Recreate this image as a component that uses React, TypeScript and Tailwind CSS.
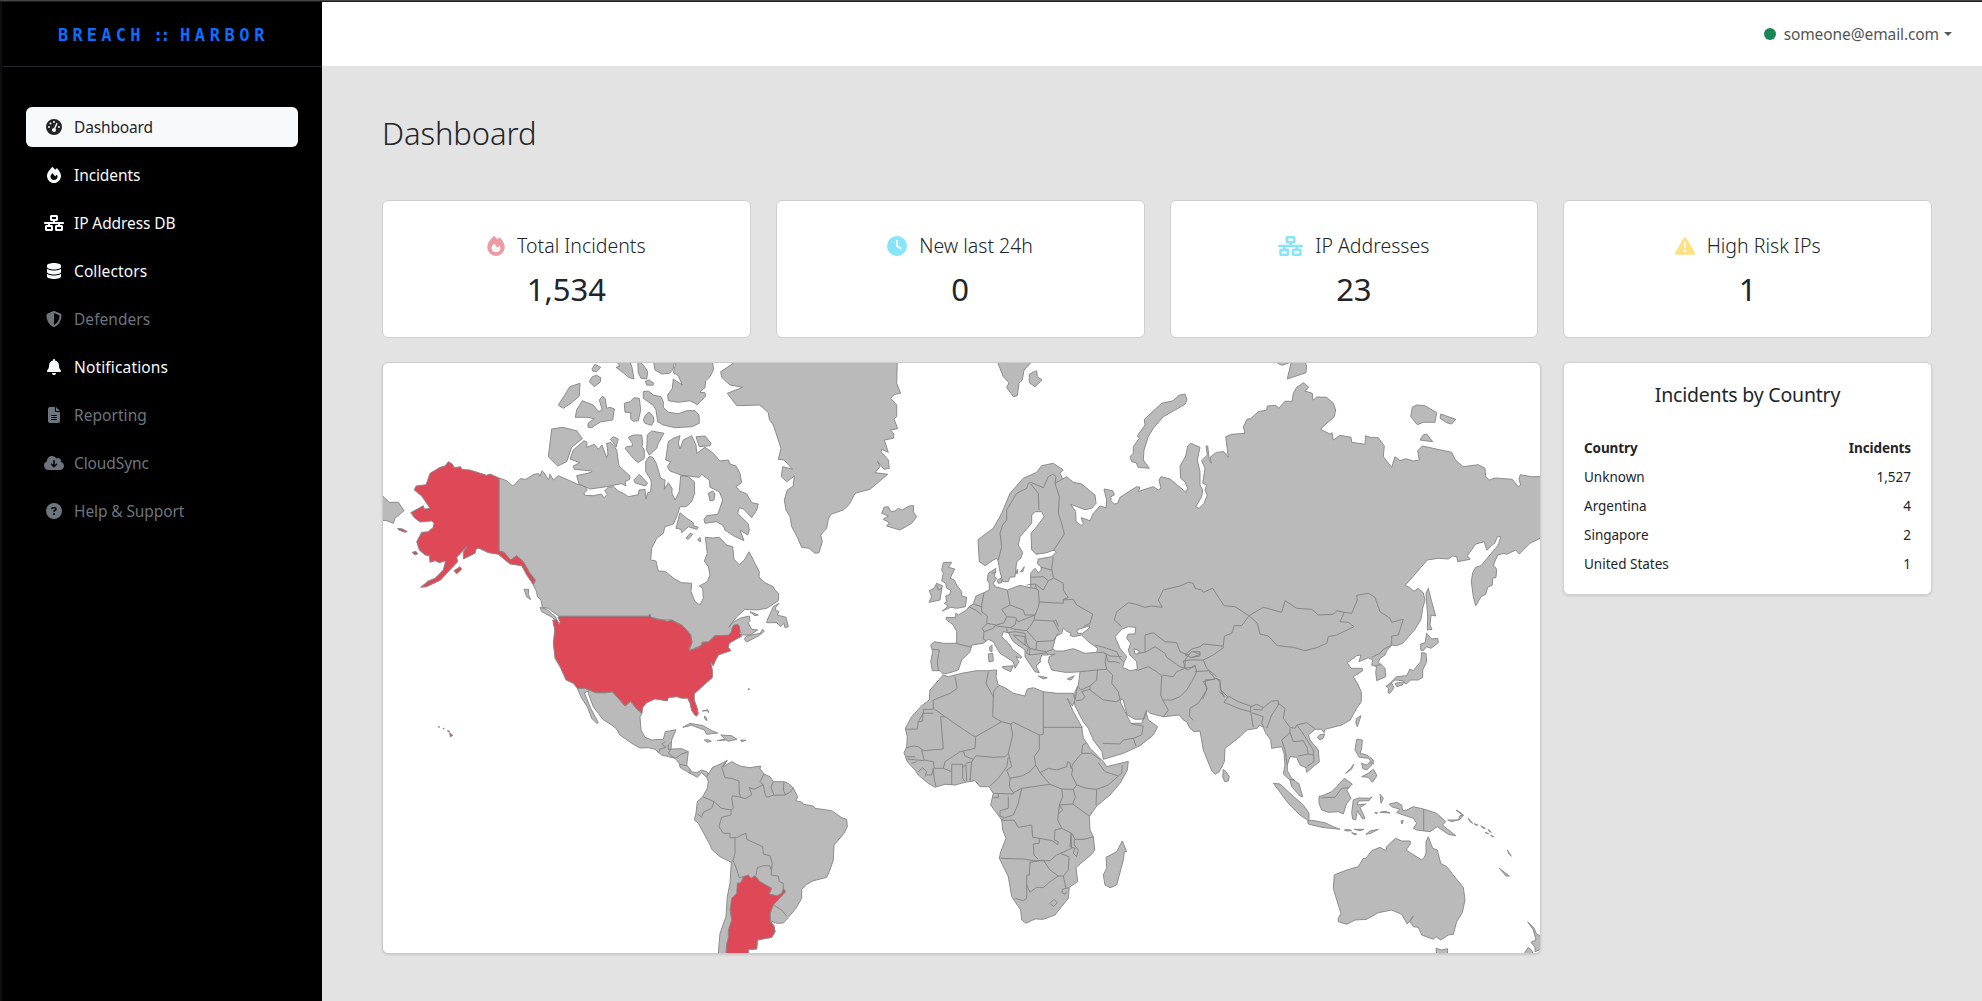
import React from "react";
import type { IconType } from "react-icons";
import {
  FaBell,
  FaCircleQuestion,
  FaClock,
  FaCloudArrowDown,
  FaDatabase,
  FaFileLines,
  FaFire,
  FaGaugeHigh,
  FaNetworkWired,
  FaShieldHalved,
  FaTriangleExclamation,
} from "react-icons/fa6";

/* ---------- map geometry ---------- */

// Each tile holds coordinates in thirds of a unit, relative to its origin.
const TILES = {
  A: [380, 360],
  B: [780, 360],
  C: [1150, 360],
  D: [640, 680],
  E: [890, 620],
  F: [1200, 640],
} as const;

type Tile = keyof typeof TILES;
type Shape = Array<Tile | string>;

function toPoints(shape: Shape): string {
  const out: string[] = [];
  for (let i = 0; i < shape.length; i += 2) {
    const [ox, oy] = TILES[shape[i] as Tile];
    for (const pair of shape[i + 1].trim().split(/\s+/)) {
      const [x, y] = pair.split(",").map(Number);
      out.push(`${(ox + x / 3).toFixed(1)},${(oy + y / 3).toFixed(1)}`);
    }
  }
  return out.join(" ");
}

const US_CANADA =
  "806,769 809,763 813,772 832,778 850,780 862,783 875,780 890,788 905,795 920,810 932,825 936,848 928,865 928,872 955,862 966,855 966,847 985,846 1005,827 1045,826 1053,818 1058,800 1062,795 1074,794 1078,800 1080,812 1079,820 1085,829";

const LAND: Shape[] = [
  // Canada
  ["A", "357,354 380,362 397,377 404,374 420,356 437,358 462,343 476,341 480,349 486,332 495,342 503,357 507,357 510,343 520,360 535,347 565,360 590,372 612,378 622,390 612,400 615,406 640,407 664,402 672,413 682,403 674,392 685,382 700,380 716,394 730,400 745,410 775,404 777,390 795,388 798,417 803,398 812,395 814,370 812,358 797,335 797,305 808,289 818,292 829,310 842,355 855,360 853,388 865,368 876,385 876,400 885,420 898,395 902,347 925,350 943,365 944,400 935,425 918,440 900,440 890,470 880,492 855,500 850,520 830,535 815,565 812,600 828,603 835,633 855,634 885,658 905,668 935,670 933,695 945,725 960,735 970,715 968,685 958,678 982,665 990,645 985,620 973,603 982,580 976,532 1000,534 1018,532 1040,555 1058,560 1062,598 1078,614 1093,600 1107,575 1125,610 1138,635 1137,652 1155,668 1180,680 1184,690 1196,700 1195,722 1160,745 1130,750 1095,748 1070,770 1046,802 1060,786 1082,774 1108,768 1110,782 1104,788 1115,808 1133,810 1110,825 1085,825 1080,812 1074,794 1062,795 1053,818 1045,826 1005,827 985,846 966,847 966,855 928,872 936,848 932,825 905,795 875,780 850,780 813,772 809,763 806,769 538,769 520,757 505,745 487,742 483,720 472,710 470,695 460,675 466,660 450,640 430,605 410,587 392,600 372,577 357,573"],
  // Arctic archipelago
  ["A", "636,27 645,13 662,22 650,35 638,33"],
  ["A", "628,65 637,50 650,46 662,53 661,66 643,80"],
  ["A", "535,135 554,105 570,80 600,70 598,108 575,128 550,145"],
  ["A", "586,172 590,150 607,122 640,135 655,155 667,150 658,120 668,108 676,117 680,145 690,142 703,147 698,180 660,186 635,203 624,202 624,190 643,176 620,172"],
  ["A", "733,130 750,125 762,113 778,115 782,150 775,182 760,184 752,177 752,158 735,157"],
  ["A", "790,180 797,165 808,156 820,170 822,183 815,196 795,190"],
  ["A", "790,95 805,93 820,105 843,110 850,125 850,142 866,157 895,161 920,152 945,152 957,165 958,190 935,200 885,203 850,195 833,185 828,150 820,136 790,115"],
  ["A", "796,64 808,60 822,71 818,76 800,75"],
  ["A", "773,0 790,15 803,35 800,57 783,55 775,38"],
  ["A", "706,0 750,5 756,22 762,57 745,52 730,38 708,22 720,18"],
  ["A", "820,0 885,0 878,30 868,40 845,42 825,30"],
  ["A", "890,0 880,38 895,47 907,75 880,57 877,85 863,105 865,122 895,127 930,122 952,134 977,108 975,98 960,97 965,90 975,83 977,62 990,50 1001,28 996,0"],
  ["A", "515,207 548,202 590,212 607,236 575,262 560,305 533,318 505,290"],
  ["A", "612,242 621,247 620,262 643,253 655,268 666,255 680,293 684,282 680,250 693,248 710,270 717,318 750,348 749,358 735,365 738,377 723,371 680,380 630,387 597,372 590,347 635,337 635,333 583,328 580,318 600,308 570,297 580,270"],
  ["A", "691,238 700,230 715,237 708,262 700,248"],
  ["A", "745,232 760,225 785,225 788,248 786,260 793,270 793,295 775,308 762,298 735,265 740,260 757,258 757,250"],
  ["A", "802,225 815,213 852,220 835,250 830,265 808,285 800,270"],
  ["A", "865,245 880,235 900,227 895,250 900,267 910,240 935,227 948,255 950,280 975,262 1000,280 1020,303 1045,300 1050,312 1068,318 1080,340 1085,368 1068,380 1078,392 1100,402 1115,428 1135,432 1130,450 1115,473 1092,448 1078,443 1073,460 1105,492 1108,510 1103,525 1080,510 1092,542 1060,527 1035,510 1030,497 1010,485 975,490 972,478 980,467 1013,463 1028,420 1018,395 990,382 988,360 965,343 958,352 905,346 870,333 862,320 872,305 857,300"],
  ["A", "948,230 975,228 993,250 990,257 958,260"],
  ["A", "762,360 778,343 803,370 795,378 765,368"],
  ["A", "985,400 998,393 1005,402 1002,420 990,423"],
  ["A", "900,458 920,475 940,488 940,497 955,502 950,508 925,500 905,518 903,508 888,505"],
  ["A", "918,535 930,520 938,523 925,538"],
  ["A", "953,540 960,532 962,545"],
  ["A", "432,688 446,688 445,703 452,719 440,710"],
  ["A", "480,742 500,748 528,772 530,782 510,768 485,755"],
  ["A", "1197,730 1187,742 1187,752 1197,754 1192,765 1218,772 1225,800 1215,803 1212,790 1202,800 1190,788 1160,788 1162,780 1180,740"],
  ["A", "1093,838 1100,828 1140,820 1148,808 1153,814 1135,828 1100,846"],
  ["A", "1110,755 1135,765 1125,767"],
  ["A", "0,400 10,410 28,427 55,427 72,452 45,475 40,490 20,482 0,480"],
  // Greenland
  ["A", "1090,-10 1060,10 1022,35 1025,52 1050,75 1088,82 1042,100 1070,137 1140,135 1165,158 1168,178 1180,195 1203,265 1195,298", "B", "12,300 38,328 8,320 4,350 20,365 43,348 40,378 22,390 13,420 18,450 30,470 35,500 50,528 65,562 88,565 105,580 117,578 127,545 122,525 140,505 145,478 153,463 190,450 208,433 225,400 270,388 323,343 285,338 300,320 292,303 312,328 328,325 325,300 303,275 305,268 325,277 313,240 340,235 342,222 332,210 353,206 342,177 350,170 350,135 332,115 345,103 362,100 350,70 352,-5"],
  // Mexico and Central America
  ["A", "592,985 615,985 648,998 680,998 697,995 715,1015 735,1038 752,1024 770,1047 786,1060", "D", "0,110 3,150 15,172 35,180 70,178 76,155 108,149 95,180 93,207 125,206 145,215 140,255 155,275 170,278 185,270 200,275 205,282 200,292 185,278 172,292 150,280 120,262 118,250 105,235 65,225 45,208 25,203 0,204 -25,190 -60,165 -72,145 -85,135 -112,118 -125,100 -140,80 -155,40", "A", "625,993 613,998 622,1020 632,1045 655,1088 650,1090 635,1075 622,1040 605,1015"],
  // South America
  ["D", "205,282 218,262 240,253 262,241 250,260 258,255 275,245 300,258 330,263 362,258 360,266 372,282 390,290 400,305 432,305 445,310 460,325 473,350 467,362 487,367 490,373 520,378 525,385 575,392 605,413 620,418 622,440 612,460 582,495 580,540 568,575 560,592 550,595 520,602 497,615 485,628 485,655 468,685 440,718 430,729 410,730 391,722 402,738 405,755 395,772 352,780 350,807 325,808 324,830 234,830 240,760 258,710 262,650 270,610 274,547 240,530 215,508 212,498 175,430 163,420 168,400 172,365 188,350 202,325 205,305 200,290"],
  ["D", "128,142 150,130 190,137 215,152 233,159 200,163 193,150 155,136"],
  ["D", "242,165 275,167 291,178 265,184 258,180 232,182 255,177"],
  ["D", "193,180 205,179 214,184 203,187"],
  ["D", "302,180 318,181 305,185"],
  ["D", "187,93 203,89 206,98 203,92"],
  ["D", "193,108 199,113 201,122 195,117"],
  ["D", "325,26 328,26 328,29 325,29"],
  // Iceland, Britain and Ireland
  ["B", "305,460 312,442 325,440 333,455 345,453 355,445 367,450 387,438 401,437 400,455 410,470 395,490 360,510 320,498 328,488 310,478 325,468"],
  ["B", "490,608 515,607 505,622 524,627 510,655 523,660 530,675 545,695 545,708 560,712 556,740 530,745 512,742 487,753 505,738 493,730 500,725 497,708 510,703 512,690 500,685 497,670 485,662 490,640 485,630"],
  ["B", "470,670 487,677 480,720 447,727 455,710 448,692 462,685"],
  // Svalbard, Novaya Zemlya
  ["B", "650,0 670,50 687,68 680,82 700,110 712,107 717,70 727,60 732,30 760,0"],
  ["B", "748,42 770,32 772,50 786,60 765,80 748,68"],
  ["B", "1108,325 1090,300 1092,270 1105,230 1120,205 1150,170 1215,133 1221,120 1215,102 1197,106 1180,122 1145,130 1093,178 1095,195 1072,228 1078,235 1060,260 1060,280 1050,290 1055,305 1068,308 1075,322"],
  // Eurasia
  ["B", "457,932 452,905 458,875 452,855 462,845 490,850 525,850 530,848 530,815 520,795 500,780 498,772 527,773 527,760 535,765 560,750 567,740 580,732 588,708 612,698 628,690 628,670 622,660 625,640 648,625 643,650 650,655 640,670 645,680 665,685 682,690 720,676 750,683 752,672 752,640 765,625 775,638 783,632 783,620 772,610 775,597 815,590 828,577 822,570 800,578 768,583 755,570 753,520 770,500 792,470 785,455 765,455 755,465 755,490 720,530 715,555 728,578 722,595 710,605 705,650 690,652 685,665 668,665 660,635 655,605 650,595 640,600 615,617 598,605 594,540 612,525 640,505 665,460 690,400 730,355 770,337 785,317 820,310 850,330 840,340 848,357 860,350 880,367 905,372 945,405 948,430 935,445 915,449 872,433 887,455 888,485 905,497 910,490 903,473 930,482 940,460 960,438 978,443 980,420 972,387 998,392 1003,405 992,410 993,422 1003,432 1013,430 1020,412 1070,380 1080,382 1075,395 1088,390 1120,380 1135,390 1143,385 1137,360 1143,350",
   "C", "60,357 108,397 113,385 105,365 92,355 90,318 107,288 113,258 122,250 150,262 142,300 150,335 150,375 158,390 155,410 137,440 148,445 162,430 172,405 165,390 170,375 158,370 165,325 155,302 172,285 168,258 173,258 178,300 184,310 180,292 200,277 222,275 235,292 227,230 245,223 285,220 280,200 292,177 302,176 325,155 350,150 352,138 378,136 386,145 405,124 426,124 430,100 440,82 461,68 476,82 465,93 487,100 489,121 500,111 530,112 550,130 557,150 553,170 511,208 540,222 546,218 550,240 570,226 603,232 605,247 645,253 647,227 660,232 685,233 703,258 700,290 725,322 735,290 750,302 768,296 790,303 808,300 803,272 817,258 905,277 915,298 938,320 985,314 1005,325 1007,350 1018,360 1035,354 1087,358 1104,380 1112,375 1107,358 1111,344 1145,350 1190,350 1190,525 1140,550 1108,582 1097,570 1070,583 1062,580 1043,585 1030,615 1040,628 1038,652 1028,655 1027,675 1013,682 1007,703 993,710 977,737 970,710 964,665 968,638 977,622 993,617 1045,555 1052,530 1042,530 1035,548 1010,570 1003,545 977,552 952,587 960,598 923,605 920,590 908,588 895,597 865,595 832,600 765,677 778,682 792,694 805,685 820,698 825,720 818,745 813,778 795,808 758,850 740,857 725,855 710,872 705,885 690,895 685,907 705,925 707,950 680,962 677,935 680,920 665,915 668,900 655,893 627,905 633,885 620,887 592,908 603,925 637,925 638,932 610,950 625,975 635,1000",
   "F", "484,160 484,185 470,205 450,240 425,255 375,268 372,278 365,268 345,268 325,285 330,300 355,330 358,365 340,380 320,397 318,383 300,375 290,352 270,350 262,375 262,392 275,415 297,432 308,470 300,468 275,440 270,420 250,402 255,375 252,340 245,320 215,325 212,300 195,275 190,262 178,255 172,265 140,270 120,290 75,325 73,365 58,395 45,403 35,392 10,330 3,290",
   "E", "930,333 912,335 898,322 890,305 880,300 868,285 820,290 780,280 770,271 762,297 735,298 712,285 705,262 700,240 690,237 693,250 705,275 715,295 722,310 755,310 768,275 775,300 803,320 790,345 750,377 700,400 640,418 636,395 610,360 595,325 580,305 555,258 553,240 555,215 565,195 568,175 570,155 545,157 525,157 485,150 475,125 478,110 495,102",
   "B", "825,882 800,885 785,885 780,900 782,905 768,918 778,938 765,935 745,905 735,890 735,870 700,845 685,818 670,815 665,830 690,855 697,868 725,890 722,895 708,890 717,905 705,925 700,905 660,880 640,845 625,838 610,850 575,855 570,875 545,900 535,930 510,938 490,942 480,932"],
  // Africa
  ["E", "160,165 175,170 215,160 260,152 290,152 320,150 318,170 325,195 345,203 370,220 405,228 412,207 430,203 460,215 500,220 550,220 555,240 547,258 532,235 550,275 575,320 580,355 590,368 600,385 625,410 640,425 650,440 715,424 712,450 690,490 660,525 620,558 598,590 600,630 610,650 614,690 605,703 558,742 563,785 538,802 535,835 495,885 460,898 435,897 408,910 395,900 392,870 365,830 355,770 328,715 332,695 348,655 338,630 335,600 302,555 310,520 297,500 270,500 255,482 225,487 195,495 165,493 135,502 115,490 85,465 75,450 52,425 42,398 50,380 52,350 46,325 65,290 95,257 118,240 120,210 155,170"],
  ["E", "697,663 710,695 703,695 700,720 680,795 660,803 645,795 640,765 650,745 648,712 680,695"],
  // Mediterranean and Baltic islands
  ["B", "625,882 638,880 640,903 627,906"],
  ["B", "628,862 636,855 636,875 630,873"],
  ["B", "667,920 700,917 692,935 670,925"],
  ["B", "775,948 802,953 790,957"],
  ["B", "862,957 883,947 873,960"],
  ["B", "652,660 663,655 665,668 655,670"],
  ["B", "708,640 712,628 713,640"],
  ["B", "722,635 733,620 728,636"],
  // Russian Arctic, Sakhalin, Japan
  ["C", "412,57 425,0 465,5 470,18 468,38"],
  ["C", "375,5 395,16 418,8"],
  ["C", "787,142 800,135 825,137 860,158 855,187 820,187 802,194 782,170"],
  ["C", "872,162 917,178 905,192 890,188 870,175"],
  ["C", "810,240 820,225 830,222 848,245"],
  ["C", "835,685 845,725 857,768 843,765 840,795 846,808 832,810 833,770 828,700"],
  ["C", "830,820 845,837 863,835 865,848 843,865 830,860 818,873 812,870 812,852 825,848"],
  ["C", "815,878 828,880 830,905 818,930 818,952 805,960 782,960 768,972 760,962 735,960 712,978 740,950 770,947 780,927 790,932 812,905"],
  ["C", "708,978 725,970 732,982 720,1000 714,998 716,985"],
  ["C", "735,970 763,965 757,975 740,980"],
  // South-east Asia
  ["F", "220,430 240,432 270,460 310,495 327,520 327,543 300,525 265,490"],
  ["F", "323,543 335,541 375,548 400,560 420,568 365,562 325,552"],
  ["F", "357,470 372,465 395,455 410,440 433,415 457,432 440,450 453,475 440,490 430,522 415,515 385,517 365,510 357,490"],
  ["F", "460,480 475,474 510,475 516,470 507,482 475,483 472,495 497,492 480,502 495,535 488,537 472,512 467,540 458,537 455,518"],
  ["F", "540,463 550,475 543,490"],
  ["F", "433,570 445,568 455,572 440,573"],
  ["F", "463,568 492,568 480,572"],
  ["F", "455,578 470,582 465,585"],
  ["F", "498,583 510,573 535,568 512,580"],
  ["F", "524,518 533,518 530,521"],
  ["F", "540,517 555,514 570,519"],
  ["F", "603,543 610,541 606,552"],
  ["F", "568,492 590,487 605,495 608,512 620,510 640,500 670,507 710,520 737,545 727,555 767,587 745,583 712,560 690,575 650,570 640,565 650,550 640,535 590,518 600,508 575,500"],
  ["F", "743,540 775,540 780,527 790,525 780,538 755,545"],
  ["F", "768,510 785,520 790,527"],
  ["F", "805,535 818,550 810,545"],
  ["F", "822,551 833,555 828,556"],
  ["F", "842,557 856,565 850,565"],
  ["F", "865,568 874,577 868,575"],
  ["F", "855,577 866,581 860,580"],
  ["F", "872,585 881,590 876,590"],
  ["F", "922,630 934,649 928,643"],
  ["F", "898,685 928,708 918,708"],
  ["F", "470,298 487,300 485,325 480,340 500,345 520,360 520,373 505,355 478,352 465,330"],
  ["F", "485,370 500,375 512,365 515,375 500,390 488,385"],
  ["F", "485,410 505,400 520,388 530,405 528,412 517,427 505,412"],
  ["F", "437,400 452,385 461,373 455,387"],
  ["F", "470,235 483,227 472,260 467,247"],
  ["F", "352,292 360,284 374,282 370,294 360,300"],
  ["F", "70,388 78,395 88,410 85,423 74,425 68,410"],
  // Australia and New Zealand
  ["F", "403,705 415,700 440,690 475,680 490,655 498,655 515,632 540,622 558,632 560,620 575,605 587,595 605,603 630,603 632,610 618,630 665,660 673,652 678,640 678,605 685,590 698,625 712,630 722,670 740,680 765,712 790,742 795,780 787,818 770,845 760,883 745,885 722,900 708,890 700,898 665,885 655,862 640,860 630,845 640,828 622,852 605,823 575,810 535,818 500,838 465,840 440,853 415,845 415,835 423,820 407,770 400,745"],
  ["F", "708,925 725,930 743,926 742,950 710,950"],
  ["F", "983,845 1003,865 1008,880 1030,895 1030,925 1005,935 1005,922 993,907 1008,900 1000,870"],
  ["F", "970,945 985,922 998,935 995,950"],
];

const WATER: Shape[] = [
  // Black Sea, Azov, Caspian, Aral
  ["B", "850,803 845,820 828,828 818,865 825,873 850,873 880,866 915,880 950,877 953,865 925,845 905,825 880,830 870,826 873,820 858,812"],
  ["B", "890,810 920,800 930,797 927,805 908,820 893,820"],
  ["B", "1005,830 1025,808 1045,800 1067,802 1065,822 1045,822 1040,835 1052,850 1045,870 1050,885 1070,905 1072,928 1050,932 1028,922 1033,905 1040,890 1020,865"],
  ["B", "1062,866 1078,872 1075,882 1065,882"],
];

const HIGHLIGHTED: Shape[] = [
  // Alaska
  ["A", "357,354 330,342 320,346 270,330 245,328 242,320 222,323 218,313 205,305 195,318 180,322 150,340 138,374 108,378 103,390 125,408 150,445 133,447 130,437 92,458 105,475 120,486 155,483 162,490 160,502 145,515 125,517 110,545 118,570 135,585 148,587 150,607 165,602 178,608 197,602 190,630 165,655 145,663 122,682 140,680 182,660 200,640 233,605 230,592 262,558 250,575 250,597 285,580 288,567 297,565 325,578 355,583 390,612 425,617 440,645 460,674 466,660 450,640 430,605 410,587 392,600 372,577 357,573"],
  ["A", "53,505 68,507 82,515 75,517 56,510"],
  ["A", "97,577 108,574 113,582 105,585"],
  ["A", "222,632 240,620 245,628 230,641"],
  // Contiguous United States
  ["A", `538,769 ${US_CANADA} 1068,838 1048,850 1045,862 1053,872 1030,880 1015,885 1005,905 1000,918 992,906 998,935 997,953 975,972 945,1000`, "D", "163,40 163,60 172,85 175,103 168,109 155,92 150,70 143,55 125,55 110,50 85,53 82,63 65,60 45,57 20,68 8,82 6,100", "A", "770,1047 752,1024 735,1038 715,1015 697,995 680,998 648,998 615,985 592,985 580,970 558,960 540,920 525,895 520,850 524,810 518,780 532,780 538,795 540,785 534,772"],
  // Argentina
  ["D", "310,590 325,585 333,595 345,587 360,605 395,625 388,642 410,647 425,640 430,625 437,635 400,675 391,700 391,725 402,738 405,755 395,772 352,780 350,807 325,808 324,830 257,830 260,790 265,775 265,750 275,720 270,690 275,655 290,640 292,610 302,608"],
  // Hawaii
  ["D", "-571,158 -562,166 -569,171"],
  ["D", "-577,151 -571,155 -575,156"],
  ["D", "-590,144 -587,146 -590,147"],
  ["D", "-604,139 -601,141 -604,142"],
];

const BORDERS: Shape[] = [
  // Central America
  ["D", "76,185 65,192 78,202 60,207 55,220"],
  ["D", "95,185 85,195 85,208 93,207"],
  ["D", "93,207 85,220 105,235 125,222 145,215"],
  ["D", "118,253 140,257"],
  ["D", "150,280 150,268"],
  // South America
  ["D", "260,243 245,262 255,293 275,295 297,303 298,340 303,352 278,347 275,355 280,385 273,390 273,405 245,412 237,440 250,460 270,460 270,473 290,473 305,465 318,460 320,478 368,500 370,522 390,527 397,550 393,585 415,588 418,605 430,610 430,625"],
  ["D", "303,352 315,356 335,345 328,322 340,328 370,315 360,305 372,282"],
  ["D", "370,315 375,342 380,352 400,346 435,345 452,335 460,322"],
  ["D", "400,305 393,322 402,345"],
  ["D", "432,305 430,330 437,345"],
  ["D", "188,350 222,365 245,385 273,390"],
  ["D", "222,365 215,385 190,397 185,411 172,402"],
  ["D", "285,473 285,520 280,540 274,547"],
  ["D", "280,543 288,562 298,593 310,590"],
  ["D", "348,587 352,563 370,557 390,558 393,570"],
  ["D", "400,675 425,690 440,708"],
  // Africa
  ["E", "195,170 202,205 180,220 130,240 130,268 100,268 100,280 85,305 82,327 46,328"],
  ["E", "130,265 165,290 152,290 160,387 100,392 85,380 70,378 50,383"],
  ["E", "130,280 98,280 98,303 87,305"],
  ["E", "165,290 245,345 257,350 335,305 308,290 310,230 288,190 295,155"],
  ["E", "310,230 312,212 325,198"],
  ["E", "257,350 255,385 220,393 225,408 250,418 258,407 310,412 345,410 355,400 368,345 362,312 335,305"],
  ["E", "362,312 370,307 448,345 460,343 460,215"],
  ["E", "460,322 578,322"],
  ["E", "448,345 448,388 433,410 437,435 450,458 480,493 430,500 395,505 370,518 358,500 360,475 350,450 365,440 355,400"],
  ["E", "355,412 350,440 325,475 300,498"],
  ["E", "360,475 395,468 420,455 437,435"],
  ["E", "450,458 475,445 500,450 530,440 533,425 540,428 543,445 548,445 545,465 560,495 550,508 515,507 480,493"],
  ["E", "543,445 550,430 575,400 605,400 632,420"],
  ["E", "575,400 578,375 588,370"],
  ["E", "625,428 645,455 685,468 695,460 697,435"],
  ["E", "685,468 655,495 620,508 590,505 560,495"],
  ["E", "620,508 618,555"],
  ["E", "550,508 556,530 548,552 598,588"],
  ["E", "515,507 518,530 508,555 548,552"],
  ["E", "508,555 518,570 503,583"],
  ["E", "508,555 503,600 515,625 545,640 555,658 582,658 610,650"],
  ["E", "515,625 495,630 493,660 505,665 503,674 487,662 448,655 428,652 425,615 385,622 372,600 335,602"],
  ["E", "448,655 448,670 430,672 432,705 445,718"],
  ["E", "332,715 400,717 430,722 480,722 500,705 545,685 543,640"],
  ["E", "543,640 540,680 555,685 550,700 560,710 565,690 553,675 553,658"],
  ["E", "420,725 418,765 410,765 410,835 400,842 375,835"],
  ["E", "420,727 460,720 480,750 505,768 480,785 460,803 440,802 420,817 410,795"],
  ["E", "510,700 537,710 535,750 520,768 505,768"],
  ["E", "520,768 528,805 538,803"],
  ["E", "528,805 517,808 516,818 525,823 530,815"],
  ["E", "480,850 492,838 502,848 490,860 480,850"],
  ["E", "310,520 370,522 370,518"],
  ["E", "325,522 325,533 308,533"],
  ["E", "355,530 355,565 330,572 330,588 342,592"],
  ["E", "395,505 385,550 370,585 345,593 335,600"],
  ["E", "133,445 160,445 185,455 185,495"],
  ["E", "185,455 185,433 218,433 218,475 225,485"],
  ["E", "218,440 228,435 230,483"],
  ["E", "228,430 245,425 240,482"],
  ["E", "245,425 250,418"],
  ["E", "160,445 165,425 210,395 220,393"],
  ["E", "95,390 102,420 130,425 133,445"],
  ["E", "50,410 75,410"],
  ["E", "52,417 102,422"],
  ["E", "65,430 80,425"],
  ["E", "85,455 98,443 110,455 105,470"],
  ["E", "110,465 125,465 130,445 133,480 138,498"],
  // Middle East and Central Asia
  ["E", "570,155 600,152 620,150 650,148"],
  ["E", "650,148 645,125 650,105 640,97 620,98"],
  ["E", "622,150 620,180 600,198 572,210 565,200"],
  ["E", "600,198 600,210 640,240 680,245 690,238 685,215 665,190 668,165 650,148"],
  ["E", "600,208 575,215 585,230 575,240 558,242"],
  ["E", "562,200 560,215 556,238"],
  ["E", "638,370 690,372 700,360 730,355 755,345 760,318 725,312"],
  ["E", "730,355 738,378"],
  ["E", "740,152 775,140 800,155 815,168 812,225 818,240 835,270 820,290"],
  ["E", "815,165 850,170 860,155 885,145 895,150 915,135 920,155 905,185 890,210 870,230 845,240 818,240"],
  ["E", "910,300 898,290 900,265 925,250 950,210 945,180 975,178"],
  ["E", "915,155 955,152 975,175 990,180 990,205 1003,232"],
  ["E", "765,95 765,45 790,38 825,65 860,68 870,95 895,105"],
  ["E", "742,100 765,97 795,80 825,100 830,112 870,140 885,145"],
  ["E", "885,145 885,120 900,100"],
  ["E", "895,105 905,95 930,95 930,108 905,112"],
  ["E", "615,75 650,85 680,95 690,115 700,125"],
  ["E", "640,97 660,108 695,110"],
  ["E", "648,105 655,125 675,125 690,130"],
  ["B", "1025,800 1003,780 1010,755 1045,728 1065,732 1095,742 1115,738 1147,742 1135,720 1150,690 1200,678", "C", "115,667 130,670 135,685 155,690 160,697 188,685 222,737 255,740 297,767 340,742 395,757 405,722 440,745 485,748 505,765 550,763 560,752 583,757 605,760 622,720 620,706 655,700 675,712 690,755 720,775 725,787 760,778 745,825 725,828 725,855 700,868 690,880 665,892"],
  ["C", "583,757 570,785 595,787 612,800 560,825 535,830 530,850 500,863 465,872 430,862 382,857 355,828 330,822 322,790 297,767"],
  ["C", "297,767 275,797 253,797 245,820 223,828 220,860"],
  ["C", "220,858 160,852 150,860 125,867 105,885"],
  ["C", "222,862 190,885 160,900 170,925 200,950"],
  ["C", "105,885 125,893 150,883 130,875"],
  ["C", "160,900 120,900 100,903 105,925 135,920"],
  ["C", "160,965 200,955 210,965 213,990 235,1012"],
  ["C", "160,965 172,985 158,1018"],
  ["C", "675,918 695,912"],
  // South Asia and Indochina
  ["F", "58,155 75,170"],
  ["F", "85,168 115,185 152,198 152,215 120,207 72,187 85,168"],
  ["F", "152,200 170,193 190,203 185,210 160,208"],
  ["F", "190,203 215,183 235,182 235,195 215,225 200,265"],
  ["F", "152,215 160,262"],
  ["F", "155,218 190,230 185,250 193,262"],
  ["F", "235,190 255,205 250,235 270,262 285,265"],
  ["F", "270,265 270,278 245,300 255,330 262,375"],
  ["F", "270,278 280,305 310,302 322,325 325,342 340,345"],
  ["F", "285,265 290,255 305,275 315,290 340,330 342,365 320,380"],
  ["F", "290,255 320,248 345,266"],
  ["F", "295,348 325,342"],
  ["F", "270,418 283,420"],
  ["F", "365,473 405,472 425,445 447,443"],
  ["F", "671,508 671,573"],
  // Europe
  ["B", "655,600 665,560 660,520 668,495 680,480 680,450 710,400 740,385 745,370 752,367 790,383 805,350 820,342 828,350 825,370 848,357"],
  ["B", "825,370 838,410 835,460 845,490 853,522 820,572"],
  ["B", "752,372 775,400 777,450"],
  ["B", "820,590 815,625 820,653 850,670 850,690 865,713 850,718 850,730 778,726 775,690 765,685 750,683"],
  ["B", "850,720 880,718 890,735 938,762 930,790 910,800"],
  ["B", "783,622 815,630"],
  ["B", "752,652 790,650 805,662 820,655"],
  ["B", "740,675 765,672 790,690 805,662"],
  ["B", "765,672 770,686"],
  ["B", "778,726 775,742 765,765 762,780 820,783 830,800 838,815"],
  ["B", "820,783 828,780 835,800"],
  ["B", "682,690 690,735 730,750 735,765 765,765"],
  ["B", "690,735 665,748 680,770 705,772 715,785 740,775 765,765"],
  ["B", "612,698 605,735 605,755 622,768 620,790 650,795 672,788 680,770"],
  ["B", "567,740 590,752 605,765"],
  ["B", "580,732 605,740"],
  ["B", "622,790 607,805 612,815 640,805 645,797 690,803 705,795 710,775"],
  ["B", "612,815 610,838 620,842"],
  ["B", "527,850 575,862"],
  ["B", "458,868 478,870 472,905 475,932"],
  ["B", "690,803 705,808 740,812 755,792 762,780"],
  ["B", "740,812 770,845 820,842 835,820"],
  ["B", "770,845 768,870 800,875 820,868"],
  ["B", "680,805 682,818 705,815 735,820 740,850 750,865 768,870"],
  ["B", "700,825 735,830 735,855 715,840 700,825"],
  ["B", "735,855 745,862 740,880 750,885 800,878 805,885"],
  ["B", "750,865 748,885"],
  ["B", "635,640 648,637"],
  ["B", "470,675 475,690 486,685"],
];

function WorldMap() {
  return (
    <svg viewBox="383 363 1157 590" className="block h-full w-full" strokeWidth="0.95" strokeLinejoin="round">
      <g fill="#bababa" stroke="#888888">
        {LAND.map((s, i) => (
          <polygon key={i} points={toPoints(s)} />
        ))}
      </g>
      <g fill="#ffffff" stroke="#888888">
        {WATER.map((s, i) => (
          <polygon key={i} points={toPoints(s)} />
        ))}
      </g>
      <g fill="none" stroke="#858585">
        {BORDERS.map((s, i) => (
          <polyline key={i} points={toPoints(s)} />
        ))}
      </g>
      <g fill="#df4957" stroke="#888888">
        {HIGHLIGHTED.map((s, i) => (
          <polygon key={i} points={toPoints(s)} />
        ))}
      </g>
    </svg>
  );
}

/* ---------- page ---------- */

interface NavEntry {
  label: string;
  icon: IconType;
  iconWidth?: string;
  state: "active" | "normal" | "disabled";
  tracking?: string;
}

const NAV: NavEntry[] = [
  { label: "Dashboard", icon: FaGaugeHigh, state: "active", tracking: "tracking-[-0.15px]" },
  { label: "Incidents", icon: FaFire, state: "normal" },
  { label: "IP Address DB", icon: FaNetworkWired, iconWidth: "w-5", state: "normal" },
  { label: "Collectors", icon: FaDatabase, state: "normal", tracking: "tracking-[0.1px]" },
  { label: "Defenders", icon: FaShieldHalved, state: "disabled", tracking: "tracking-[0.05px]" },
  { label: "Notifications", icon: FaBell, state: "normal", tracking: "tracking-[0.15px]" },
  { label: "Reporting", icon: FaFileLines, state: "disabled", tracking: "tracking-[0.05px]" },
  { label: "CloudSync", icon: FaCloudArrowDown, iconWidth: "w-5", state: "disabled" },
  { label: "Help & Support", icon: FaCircleQuestion, state: "disabled" },
];

const NAV_COLORS = {
  active: "bg-[#f8f9fa] text-[#212529]",
  normal: "text-[#f8f9fa]",
  disabled: "text-[#6c757d]",
};

function Sidebar() {
  return (
    <aside className="flex w-[322px] shrink-0 flex-col border-l-2 border-[#0d0d0d] bg-black">
      <div className="flex h-[65px] items-center border-b border-[#212529] pl-[56px] pt-0.5 font-['DejaVu_Sans_Mono',monospace] text-[17px] font-bold leading-none text-[#0d6efd]">
        <span className="w-[95px] tracking-[4.2px]">BREACH</span>
        <span className="w-[27px] tracking-[-3px]">::</span>
        <span className="tracking-[4.6px]">HARBOR</span>
      </div>
      <nav className="flex flex-col gap-2 px-6 pt-10">
        {NAV.map(({ label, icon: Icon, iconWidth, state, tracking }) => (
          <a key={label} className={`flex h-10 items-center rounded-md pl-[18px] text-[15.5px] ${NAV_COLORS[state]}`}>
            <span className="flex w-5 justify-center">
              <Icon className={`h-4 shrink-0 ${iconWidth ?? "w-4"}`} />
            </span>
            <span className={`ml-[10px] mt-0.5 ${tracking ?? "tracking-[-0.1px]"}`}>{label}</span>
          </a>
        ))}
      </nav>
    </aside>
  );
}

const STATS = [
  { label: "Total Incidents", value: "1,534", icon: FaFire, style: "w-[18px] text-[#ee9aa2]" },
  { label: "New last 24h", value: "0", icon: FaClock, style: "w-5 text-[#86e5fa]" },
  { label: "IP Addresses", value: "23", icon: FaNetworkWired, style: "w-[25px] text-[#86e5fa]" },
  { label: "High Risk IPs", value: "1", icon: FaTriangleExclamation, style: "w-5 text-[#ffe083]" },
];

const ROWS = [
  ["Unknown", "1,527"],
  ["Argentina", "4"],
  ["Singapore", "2"],
  ["United States", "1"],
];

export default function App() {
  return (
    <div className="flex h-[1001px] w-[1982px] flex-col overflow-hidden bg-[#e3e3e3] font-['Noto_Sans','Open_Sans',sans-serif] text-[#212529]">
      <div className="h-0.5 shrink-0 border-b border-[#1c1c1c] bg-[#444444]" />
      <div className="flex min-h-0 flex-1">
        <Sidebar />
        <div className="flex flex-1 flex-col">
          <header className="flex h-16 shrink-0 items-center justify-end bg-white pr-[30px] text-[15.5px] text-[#555555]">
            <span className="mr-2 size-3 rounded-full bg-[#198754]" />
            <span className="mt-0.5 tracking-[-0.1px]">someone@email.com</span>
            <span className="ml-[5px] border-x-4 border-t-4 border-x-transparent border-t-[#555555]" />
          </header>
          <main className="pl-[60px] pr-[50px]">
            <h1 className="mt-[43px] h-[91px] text-[31px] font-light leading-[48px] tracking-[-0.1px]">Dashboard</h1>
            <section className="grid grid-cols-4 gap-[25px]">
              {STATS.map(({ label, value, icon: Icon, style }) => (
                <div key={label} className="flex h-[138px] flex-col items-center rounded-md border border-[#cfcfcf] bg-white pt-[31px]">
                  <div className="flex h-7 items-center gap-3 text-[19.5px] font-light">
                    <Icon className={`h-5 shrink-0 ${style}`} />
                    <span>{label}</span>
                  </div>
                  <div className="mt-2 text-[31px] leading-[42px]">{value}</div>
                </div>
              ))}
            </section>
            <section className="mt-6 flex items-start justify-between">
              <div className="h-[592px] w-[1159px] overflow-hidden rounded-md border border-[#cbcbcb] bg-white shadow-sm">
                <WorldMap />
              </div>
              <div className="h-[233px] w-[369px] rounded-md border border-[#d2d2d2] bg-white px-5 pt-[16px] shadow-sm">
                <h2 className="text-center text-[19.5px] leading-8 tracking-[-0.2px]">Incidents by Country</h2>
                <div className="mt-[23px] text-[13.5px] leading-[29px]">
                  <div className="flex justify-between font-bold tracking-[-0.1px]">
                    <span>Country</span>
                    <span>Incidents</span>
                  </div>
                  {ROWS.map(([country, count]) => (
                    <div key={country} className="flex justify-between">
                      <span>{country}</span>
                      <span>{count}</span>
                    </div>
                  ))}
                </div>
              </div>
            </section>
          </main>
        </div>
      </div>
    </div>
  );
}
